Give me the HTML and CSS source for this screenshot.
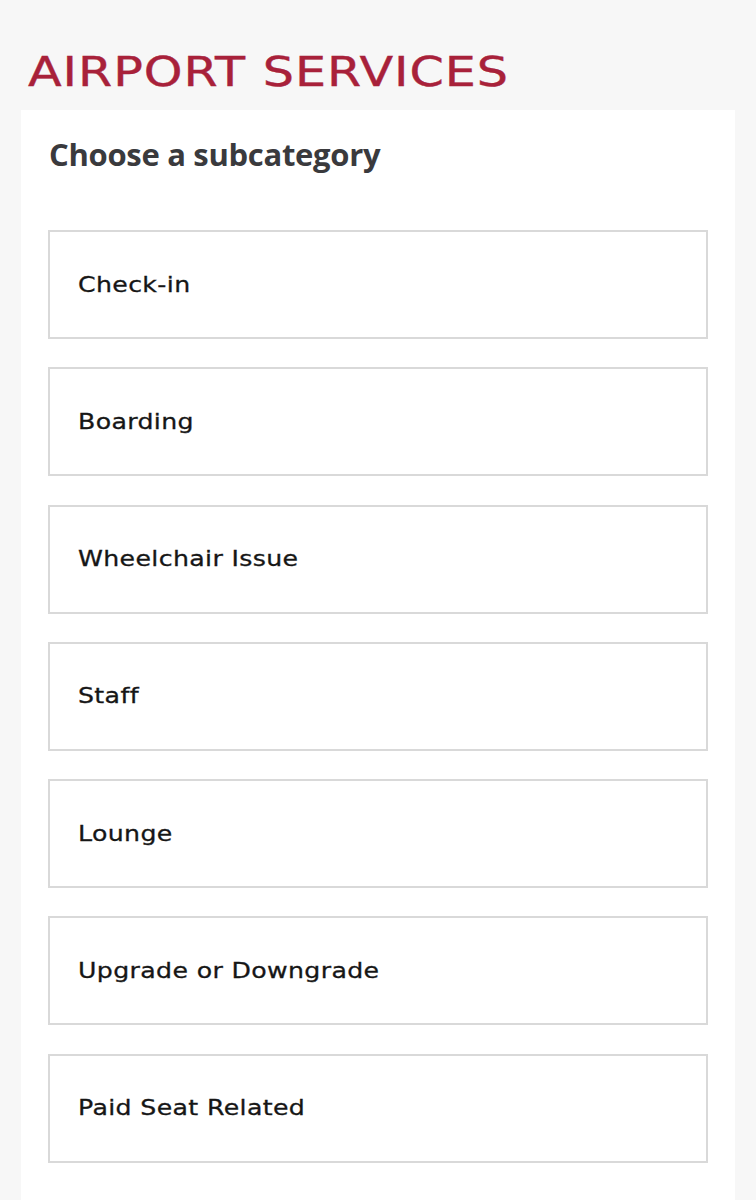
FILE: index.html
```html
<!DOCTYPE html>
<html lang="en">
<head>
    <meta charset="UTF-8">
    <meta name="viewport" content="width=device-width, initial-scale=1.0">
    <title>Airport Services</title>
    <link rel="stylesheet" href="styles.css">
</head>
<body>
    <h1 class="page-title"><span class="wide">AIRPORT SERVICES</span></h1>
    <div class="panel">
        <h2 class="panel-title">Choose a subcategory</h2>
        <div class="options">
            <div class="option"><span class="wide">Check-in</span></div>
            <div class="option"><span class="wide">Boarding</span></div>
            <div class="option"><span class="wide">Wheelchair Issue</span></div>
            <div class="option"><span class="wide">Staff</span></div>
            <div class="option"><span class="wide">Lounge</span></div>
            <div class="option"><span class="wide">Upgrade or Downgrade</span></div>
            <div class="option"><span class="wide">Paid Seat Related</span></div>
        </div>
    </div>
</body>
</html>
```

FILE: styles.css
```css
body {
    margin: 0;
    background-color: #f7f7f7;
    font-family: "DejaVu Sans", sans-serif;
}
/* the brand face is an extended sans, so stretch DejaVu a bit */
.wide {
    display: inline-block;
    transform: scaleX(1.2);
    transform-origin: left center;
    white-space: nowrap;
}
.page-title {
    margin: 0;
    padding: 48px 0 0 28px;
    height: 110px;
    box-sizing: border-box;
    color: #a8213a;
    font-size: 41px;
    font-weight: normal;
    line-height: 48px;
    letter-spacing: 0.8px;
    -webkit-text-stroke: 0.4px #a8213a;
}
.panel {
    background: white;
    margin: 0 21px;
    padding: 24px 27px 40px 27px;
}
.panel-title {
    margin: 0 0 56px 1px;
    color: #3a3a3d;
    font-family: "Open Sans", sans-serif;
    font-size: 31px;
    font-weight: bold;
    line-height: 40px;
    letter-spacing: -0.3px;
}
.options {
    display: flex;
    flex-direction: column;
    gap: 28.3px;
}
.option {
    height: 109px;
    box-sizing: border-box;
    border: 2px solid #d9d9d9;
    padding: 0 28px;
    display: flex;
    align-items: center;
    color: #161616;
    font-size: 21px;
    letter-spacing: 0.3px;
    -webkit-text-stroke: 0.3px #161616;
}
```
